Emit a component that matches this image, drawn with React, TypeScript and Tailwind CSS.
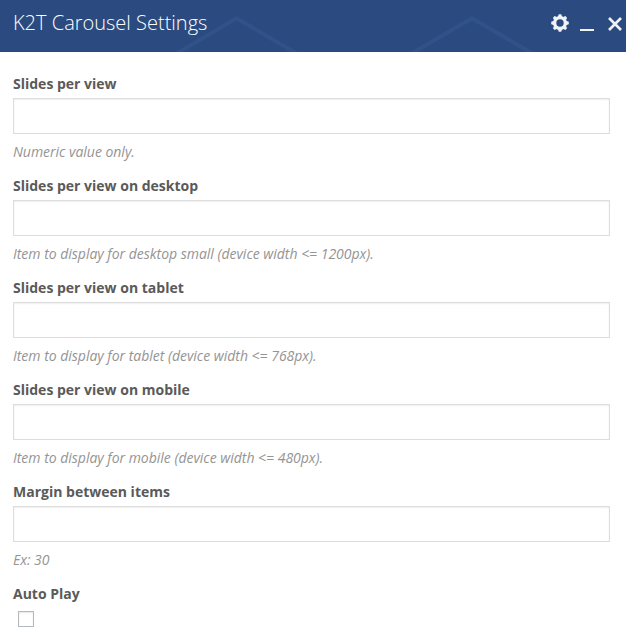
interface Field {
  id: string;
  label: string;
  hint: string;
}

const fields: Field[] = [
  { id: 'slides', label: 'Slides per view', hint: 'Numeric value only.' },
  {
    id: 'desktop',
    label: 'Slides per view on desktop',
    hint: 'Item to display for desktop small (device width <= 1200px).',
  },
  {
    id: 'tablet',
    label: 'Slides per view on tablet',
    hint: 'Item to display for tablet (device width <= 768px).',
  },
  {
    id: 'mobile',
    label: 'Slides per view on mobile',
    hint: 'Item to display for mobile (device width <= 480px).',
  },
  { id: 'margin', label: 'Margin between items', hint: 'Ex: 30' },
];

function GearIcon() {
  const teeth = [0, 45, 90, 135, 180, 225, 270, 315];
  return (
    <svg width="18" height="18" viewBox="-9 -9 18 18" fill="#f0f2f6">
      {teeth.map((angle) => (
        <path key={angle} d="M-2.3 -6L-1.2 -8.8H1.2L2.3 -6Z" transform={`rotate(${angle})`} />
      ))}
      <circle r="5.3" fill="none" stroke="#f0f2f6" strokeWidth="3.2" />
    </svg>
  );
}

function Header() {
  return (
    <header className="relative flex h-[52px] items-start justify-between bg-[#2b4b80] pl-[13px]">
      <svg className="absolute inset-0" width="626" height="52" fill="none" stroke="#315288" strokeWidth="4">
        <path d="M174 55L236.500 18.200L299 55" />
        <path d="M409 55L472 18.200L535 55" />
      </svg>
      <h1 className="relative pt-[9px] text-[20px] leading-[27px] font-light text-white">K2T Carousel Settings</h1>
      <div className="relative flex items-start pr-[3px]">
        <button aria-label="Settings" className="mt-[14px]">
          <GearIcon />
        </button>
        <button aria-label="Minimize" className="mt-[29px] ml-[11px] h-[2px] w-[14px] bg-[#f0f2f6]" />
        <button aria-label="Close" className="mt-[16px] ml-[13px]">
          <svg width="16" height="16" fill="none" stroke="#f0f2f6" strokeWidth="2.6">
            <path d="M2 2L14 14M14 2L2 14" />
          </svg>
        </button>
      </div>
    </header>
  );
}

export default function App() {
  return (
    <main className="h-[634px] w-[626px] overflow-hidden bg-white font-['Open_Sans','Noto_Sans',sans-serif] text-[#5a5a5a]">
      <Header />
      <form className="pt-[22px] pr-[16px] pl-[13px]">
        {fields.map((field) => (
          <div key={field.id} className="h-[102px]">
            <label htmlFor={field.id} className="block h-6 text-[14px] leading-5 font-bold">
              {field.label}
            </label>
            <input
              id={field.id}
              type="text"
              className="block h-9 w-full border border-[#dddddd] bg-white px-2 shadow-[inset_0_1px_2px_rgba(0,0,0,0.07)] outline-none"
            />
            <p className="pt-2 text-[14px] leading-5 tracking-[-0.018px] text-[#949494] italic">{field.hint}</p>
          </div>
        ))}
        <label htmlFor="autoplay" className="block text-[14px] leading-5 font-bold">
          Auto Play
        </label>
        <input
          id="autoplay"
          type="checkbox"
          className="mt-[7px] ml-[5px] block h-4 w-4 appearance-none border border-[#b4b9be] bg-white shadow-[inset_0_1px_2px_rgba(0,0,0,0.1)]"
        />
      </form>
    </main>
  );
}
